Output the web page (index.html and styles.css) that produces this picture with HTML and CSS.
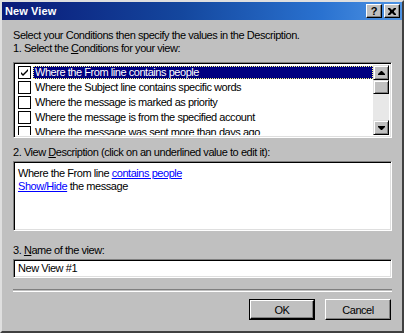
FILE: index.html
```html
<!DOCTYPE html>
<html lang="en">
<head>
    <meta charset="UTF-8">
    <title>New View</title>
    <link rel="stylesheet" href="styles.css">
</head>
<body>
    <div class="dialog">
        <div class="titlebar">
            <span class="title">New View</span>
            <div class="caption-btns">
                <span class="cbtn help">?</span>
                <span class="cbtn close">
                    <svg width="8" height="7" viewBox="0 0 8 7"><path d="M0 0h2l2 2 2-2h2v1l-2 2v1l2 2v1h-2l-2-2-2 2h-2v-1l2-2v-1l-2-2z" fill="#000"/></svg>
                </span>
            </div>
        </div>

        <div class="content">
            <p class="intro">Select your Conditions then specify the values in the Description.</p>

            <div class="label">1. Select the <u>C</u>onditions for your view:</div>
            <div class="listbox sunken">
                <ul class="items">
                    <li class="selected"><span class="check"><svg width="9" height="9" viewBox="0 0 9 9"><path d="M1 4l2 2 5-5v2l-5 5-2-2z" fill="#000"/></svg></span><span class="text">Where the From line contains people</span></li>
                    <li><span class="check"></span><span class="text">Where the Subject line contains specific words</span></li>
                    <li><span class="check"></span><span class="text">Where the message is marked as priority</span></li>
                    <li><span class="check"></span><span class="text">Where the message is from the specified account</span></li>
                    <li><span class="check"></span><span class="text">Where the message was sent more than days ago</span></li>
                </ul>
                <div class="scrollbar">
                    <span class="sbtn"><svg width="7" height="4" viewBox="0 0 7 4"><path d="M3 0h1l3 3v1h-7v-1z" fill="#000"/></svg></span>
                    <span class="thumb"></span>
                    <span class="track"></span>
                    <span class="sbtn"><svg width="7" height="4" viewBox="0 0 7 4"><path d="M0 0h7v1l-3 3h-1l-3-3z" fill="#000"/></svg></span>
                </div>
            </div>

            <div class="label label-desc">2. View <u>D</u>escription (click on an underlined value to edit it):</div>
            <div class="descbox sunken">
                <div>Where the From line <a href="#">contains people</a></div>
                <div><a href="#">Show/Hide</a> the message</div>
            </div>

            <div class="label label-name">3. <u>N</u>ame of the view:</div>
            <div class="namebox sunken">New View #1</div>

            <div class="separator"></div>

            <div class="buttons">
                <span class="btn default"><span class="btn-face">OK</span></span>
                <span class="btn"><span class="btn-face">Cancel</span></span>
            </div>
        </div>
    </div>
</body>
</html>
```

FILE: styles.css
```css
body { margin: 0; font-family: "Liberation Sans", Arial, sans-serif; font-size: 11px; color: #000; }

.dialog { width: 404px; height: 333px; box-sizing: border-box; background: #c0c0c0; border: 2px solid; border-color: #dfdfdf #404040 #404040 #dfdfdf; overflow: hidden; }

.titlebar { height: 18px; display: flex; align-items: center; justify-content: space-between; padding: 0 2px 0 3px; background: linear-gradient(to right, #0a1a78, #14479e 45%, #2a72d0 80%, #4f94e4); }
.title { color: #fff; font-weight: bold; font-size: 11px; letter-spacing: 0.1px; }
.caption-btns { display: flex; gap: 2px; }
.cbtn { width: 16px; height: 14px; box-sizing: border-box; background: #c0c0c0; display: flex; align-items: center; justify-content: center; border: 1px solid; border-color: #fff #000 #000 #fff; box-shadow: inset -1px -1px 0 #808080; font-weight: bold; font-size: 11px; line-height: 11px; }

.content { padding: 9px 10px 0 11px; letter-spacing: -0.45px; }
.intro { margin: 0; line-height: 13px; }
.label { line-height: 13px; }

.sunken { box-sizing: border-box; background: #fff; border: 1px solid; border-color: #808080 #fff #fff #808080; box-shadow: inset 1px 1px 0 #000, inset -1px -1px 0 #dfdfdf; }

.listbox { height: 76px; margin-top: 7px; display: flex; padding: 2px; overflow: hidden; }
.items { list-style: none; margin: 0; padding: 0 0 0 2px; flex: 1; overflow: hidden; }
.items li { height: 15px; display: flex; align-items: center; white-space: nowrap; }
.check { width: 11px; height: 11px; flex: none; border: 1px solid #000; background: #fff; display: flex; align-items: center; justify-content: center; margin-right: 2px; }
.text { height: 13px; line-height: 13px; padding: 0 2px; }
.selected .text { flex: 1; background: #000080; color: #fff; outline: 1px dotted #ffff80; outline-offset: -1px; }

.scrollbar { width: 16px; flex: none; display: flex; flex-direction: column; background: #e8e8e8; }
.sbtn, .thumb { height: 15px; box-sizing: border-box; flex: none; background: #c0c0c0; border: 1px solid; border-color: #dfdfdf #000 #000 #dfdfdf; box-shadow: inset 1px 1px 0 #fff, inset -1px -1px 0 #808080; display: flex; align-items: center; justify-content: center; }
.thumb { height: 14px; }
.track { flex: 1; }

.label-desc { margin-top: 8px; }
.descbox { height: 70px; margin-top: 2px; padding: 5px 4px 3px; line-height: 13px; }
.descbox a { color: #0000ff; }

.label-name { margin-top: 13px; }
.namebox { height: 19px; margin-top: 2px; padding: 2px 4px; line-height: 13px; }

.separator { margin-top: 11px; height: 1px; border-top: 1px solid #808080; border-bottom: 1px solid #fff; }

.buttons { display: flex; justify-content: flex-end; gap: 10px; margin-top: 7px; padding-right: 1px; }
.btn { width: 66px; height: 21px; box-sizing: border-box; border: 1px solid; border-color: #fff #000 #000 #fff; display: flex; }
.btn-face { flex: 1; display: flex; align-items: center; justify-content: center; box-shadow: inset -1px -1px 0 #808080; }
.btn.default { border: 1px solid #000; }
.btn.default .btn-face { border: 1px solid; border-color: #fff #000 #000 #fff; box-shadow: inset -1px -1px 0 #808080; }
```
